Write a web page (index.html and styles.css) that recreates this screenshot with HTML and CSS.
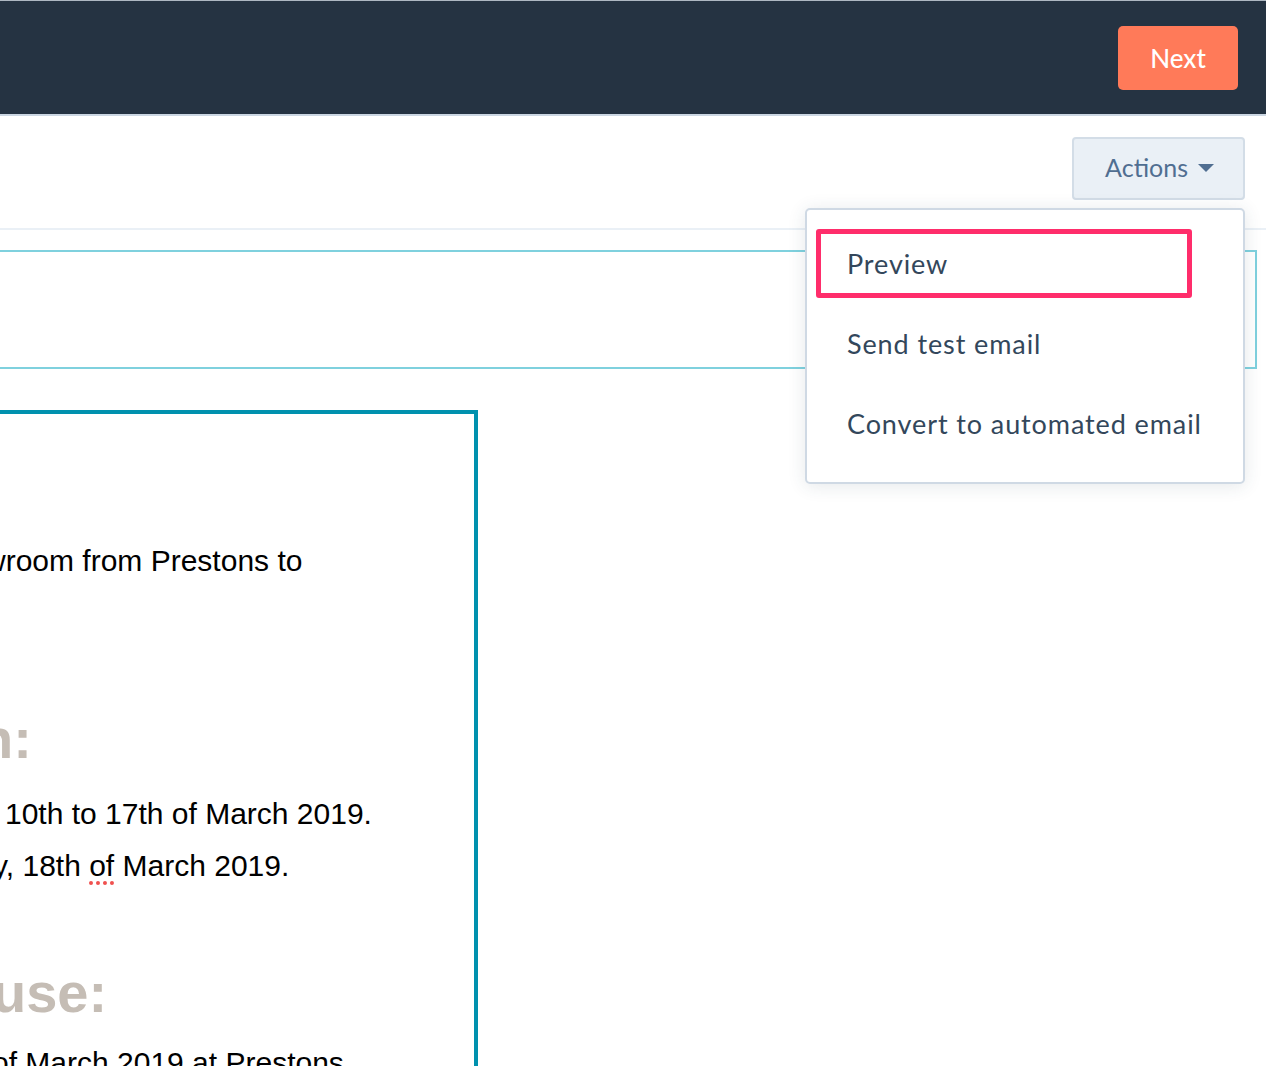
FILE: index.html
```html
<!DOCTYPE html>
<html lang="en">
<head>
    <meta charset="UTF-8">
    <meta name="viewport" content="width=device-width, initial-scale=1.0">
    <title>Email editor</title>
    <link rel="stylesheet" href="styles.css">
</head>
<body>
    <header class="topbar">
        <button class="btn-next">Next</button>
    </header>

    <div class="toolbar">
        <div class="actions">
            <button class="btn-actions">Actions <span class="caret"></span></button>
            <ul class="menu">
                <li class="menu__item menu__item--marked">Preview<span class="mark"></span></li>
                <li class="menu__item">Send test email</li>
                <li class="menu__item">Convert to automated email</li>
            </ul>
        </div>
    </div>

    <main class="canvas">
        <div class="module-box"></div>

        <div class="email">
            <p class="txt line-a">wroom from Prestons to</p>
            <h2 class="heading heading-a">n:</h2>
            <p class="txt line-b">10th to 17th of March 2019.</p>
            <p class="txt line-c">y, 18th <span class="typo">of</span> March 2019.</p>
            <h2 class="heading heading-b">use:</h2>
            <p class="txt line-d">of March 2019 at Prestons</p>
        </div>
    </main>
</body>
</html>
```

FILE: styles.css
```css
*{
    box-sizing: border-box;
}
html, body{
    margin: 0;
    padding: 0;
}
body{
    width: 1266px;
    height: 1066px;
    overflow: hidden;
    background-color: #fff;
    font-family: Lato, "Open Sans", sans-serif;
}

/* top bar */
.topbar{
    height: 116px;
    background-color: #253342;
    border-top: 1px solid #aeb8c2;
    border-bottom: 2px solid #cbd6e2;
    display: flex;
    justify-content: flex-end;
    align-items: flex-start;
    padding: 25px 28px 0 0;
}
.btn-next{
    width: 120px;
    height: 64px;
    border: none;
    border-radius: 5px;
    background-color: #ff7a59;
    color: #fff;
    font-family: inherit;
    font-size: 26px;
    font-weight: 500;
    cursor: pointer;
}

/* toolbar with the actions menu */
.toolbar{
    height: 114px;
    border-bottom: 2px solid #eaf0f6;
    display: flex;
    justify-content: flex-end;
    padding: 21px 21px 0 0;
}
.actions{
    position: relative;
}
.btn-actions{
    height: 63px;
    padding: 0 29px 3px 31px;
    background-color: #eaf0f6;
    border: 2px solid #d3dde7;
    border-radius: 4px;
    color: #506e91;
    font-family: inherit;
    font-size: 25px;
    display: flex;
    align-items: center;
    gap: 10px;
    cursor: pointer;
}
.caret{
    width: 0;
    height: 0;
    border-left: 8px solid transparent;
    border-right: 8px solid transparent;
    border-top: 8px solid #506e91;
    margin-top: 1px;
}
.menu{
    position: absolute;
    top: 71px;
    right: 0;
    width: 440px;
    margin: 0;
    padding: 13px 0 19px 0;
    list-style: none;
    background-color: #fff;
    border: 2px solid #cfd9e4;
    border-radius: 5px;
    box-shadow: 0 2px 18px rgba(45, 62, 80, 0.12);
    z-index: 5;
}
.menu__item{
    position: relative;
    height: 80px;
    display: flex;
    align-items: center;
    padding-left: 40px;
    color: #33475b;
    font-size: 27px;
    letter-spacing: 0.9px;
    cursor: pointer;
}
.mark{
    position: absolute;
    left: 9px;
    top: 6px;
    width: 376px;
    height: 69px;
    border: 5px solid #ff2d6b;
    border-radius: 3px;
}

/* editor canvas */
.canvas{
    padding-top: 20px;
}
.module-box{
    margin-left: -10px;
    width: 1267px;
    height: 119px;
    border: 2px solid #7fd1de;
}
.email{
    margin-top: 41px;
    margin-left: -60px;
    width: 538px;
    height: 700px;
    border: 4px solid #0091ae;
    padding-top: 121px;
    font-family: "Liberation Sans", Arial, sans-serif;
    color: #000;
}
.txt{
    margin: 0;
    font-size: 30px;
    line-height: 52px;
    white-space: nowrap;
}
.heading{
    margin: 0;
    font-size: 56px;
    line-height: 67px;
    font-weight: bold;
    color: #c5bdb5;
    white-space: nowrap;
}
.line-a{ margin-left: 40px; }
.heading-a{ margin: 118px 0 0 35px; }
.line-b{ margin: 16px 0 0 61px; }
.line-c{ margin-left: 49px; }
.heading-b{ margin: 67px 0 0 48px; }
.line-d{ margin: 11px 0 0 48px; }
.typo{
    text-decoration: underline dotted #f0514f;
    text-decoration-thickness: 4px;
    text-underline-offset: 5px;
}
```
